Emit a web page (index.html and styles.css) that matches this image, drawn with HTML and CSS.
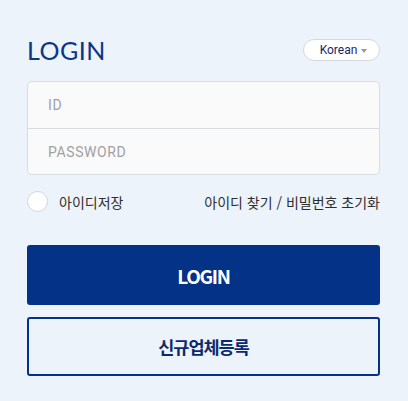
FILE: index.html
```html
<!DOCTYPE html>
<html lang="ko">

<head>
    <meta charset="UTF-8">
    <meta name="viewport" content="width=device-width, initial-scale=1.0">
    <title>Login</title>
    <link rel="stylesheet" href="styles.css">
</head>

<body>
    <div class="login">
        <div class="login-head">
            <h1>LOGIN</h1>
            <button class="lang">Korean <span class="arrow"></span></button>
        </div>

        <div class="fields">
            <input type="text" placeholder="ID">
            <input type="password" placeholder="PASSWORD">
        </div>

        <div class="options">
            <label class="save">
                <span class="check"></span>
                아이디저장
            </label>
            <a href="#">아이디 찾기 / 비밀번호 초기화</a>
        </div>

        <button class="btn btn-login">LOGIN</button>
        <button class="btn btn-join">신규업체등록</button>
    </div>
</body>

</html>
```

FILE: styles.css
```css
* {
    margin: 0;
    padding: 0;
    box-sizing: border-box;
    font-family: "Noto Sans CJK KR", sans-serif;
}

body {
    background-color: #edf3fb;
}

.login {
    padding: 36px 28px 0 27px;
}

.login-head {
    display: flex;
    justify-content: space-between;
    align-items: center;
    height: 28px;
}

.login-head h1 {
    font-family: Lato, sans-serif;
    font-size: 25px;
    font-weight: 400;
    color: #0b3686;
    letter-spacing: 0.5px;
}

.lang {
    width: 77px;
    height: 22px;
    border: 1px solid #d5d8de;
    border-radius: 11px;
    background-color: #fff;
    font-family: Roboto, sans-serif;
    font-size: 12px;
    color: #16286b;
    display: flex;
    align-items: center;
    justify-content: center;
    gap: 4px;
    padding-left: 4px;
}

.lang .arrow {
    width: 0;
    height: 0;
    border-left: 3px solid transparent;
    border-right: 3px solid transparent;
    border-top: 4px solid #999;
    margin-top: 1px;
}

.fields {
    margin-top: 17px;
    border: 1px solid #d8dbe0;
    border-radius: 5px;
    background-color: #fafafa;
    overflow: hidden;
}

.fields input {
    display: block;
    width: 100%;
    height: 46px;
    border: none;
    background: transparent;
    padding: 0 20px;
    font-family: Roboto, sans-serif;
    font-size: 14px;
    letter-spacing: 0.6px;
    outline: none;
}

.fields input::placeholder {
    color: #a0a0a4;
}

.fields input + input {
    border-top: 1px solid #d8dbe0;
}

.options {
    display: flex;
    justify-content: space-between;
    align-items: center;
    margin-top: 16px;
    font-size: 14px;
    color: #2e2e2e;
}

.save {
    display: flex;
    align-items: center;
    gap: 11px;
}

.check {
    width: 21px;
    height: 21px;
    border: 1px solid #d4d4d4;
    border-radius: 50%;
    background-color: #fff;
}

.options a {
    color: #2e2e2e;
    text-decoration: none;
}

.btn {
    display: block;
    width: 100%;
    height: 60px;
    border-radius: 3px;
    font-size: 17.5px;
    font-weight: 700;
    letter-spacing: -1px;
}

.btn-login {
    margin-top: 33px;
    border: none;
    background-color: #033287;
    color: #fff;
    font-size: 19px;
    letter-spacing: -1.3px;
}

.btn-join {
    margin-top: 12px;
    height: 59px;
    border: 2px solid #033287;
    background-color: transparent;
    color: #0b2a6e;
}
```
